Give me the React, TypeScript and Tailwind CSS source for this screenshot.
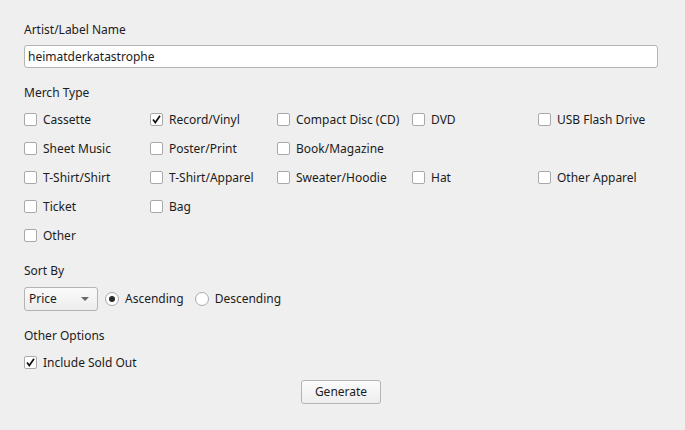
import React from 'react';

const Check: React.FC<{ checked?: boolean }> = ({ checked }) => (
  <span className="flex h-[13px] w-[13px] shrink-0 items-center justify-center rounded-[2px] border border-[#a9a9a9] bg-white">
    {checked && (
      <svg width="11" height="11" viewBox="0 0 11 11">
        <path d="M2 5.5 L4.3 8.6 L9 1.8" fill="none" stroke="#111" strokeWidth="1.7" />
      </svg>
    )}
  </span>
);

const Radio: React.FC<{ checked?: boolean }> = ({ checked }) => (
  <span className="flex h-[14px] w-[14px] shrink-0 items-center justify-center rounded-full border border-[#a9a9a9] bg-white">
    {checked && <span className="h-[6px] w-[6px] rounded-full bg-[#2a2a2a]" />}
  </span>
);

const CheckItem: React.FC<{ label: string; checked?: boolean }> = ({ label, checked }) => (
  <div className="flex h-[29px] items-center gap-[6px] whitespace-nowrap">
    <Check checked={checked} />
    <span>{label}</span>
  </div>
);

const rows: (string | null)[][] = [
  ['Cassette', 'Record/Vinyl', 'Compact Disc (CD)', 'DVD', 'USB Flash Drive'],
  ['Sheet Music', 'Poster/Print', 'Book/Magazine', null, null],
  ['T-Shirt/Shirt', 'T-Shirt/Apparel', 'Sweater/Hoodie', 'Hat', 'Other Apparel'],
  ['Ticket', 'Bag', null, null, null],
  ['Other', null, null, null, null],
];

export default function App() {
  return (
    <div
      className="flex h-[430px] w-[685px] flex-col bg-[#efefef] px-[24px] pt-[22px] text-[12px] leading-[16px] text-[#1c1c1c]"
      style={{ fontFamily: '"Noto Sans", sans-serif' }}
    >
      <div>Artist/Label Name</div>
      <div className="mt-[7px] flex h-[23px] w-[634px] items-center rounded-[3px] border border-[#b4b4b4] bg-white px-[3px]">
        heimatderkatastrophe
      </div>

      <div className="mt-[17px]">Merch Type</div>
      <div className="mt-[4px] grid grid-cols-[126px_127px_135px_126px_auto]">
        {rows.flat().map((item, i) =>
          item ? <CheckItem key={i} label={item} checked={item === 'Record/Vinyl'} /> : <div key={i} className="h-[29px]" />
        )}
      </div>

      <div className="mt-[13px]">Sort By</div>
      <div className="mt-[8px] flex h-[24px] items-center">
        <div className="flex h-[24px] w-[74px] items-center justify-between rounded-[3px] border border-[#b4b4b4] bg-gradient-to-b from-[#fafafa] to-[#ededed] pl-[4px] pr-[8px]">
          <span>Price</span>
          <svg width="8" height="4" viewBox="0 0 8 4">
            <path d="M0 0 H8 L4 4 Z" fill="#6a6a6a" />
          </svg>
        </div>
        <div className="ml-[7px] flex items-center gap-[6px]">
          <Radio checked />
          <span>Ascending</span>
        </div>
        <div className="ml-[11px] flex items-center gap-[6px]">
          <Radio />
          <span>Descending</span>
        </div>
      </div>

      <div className="mt-[17px]">Other Options</div>
      <div className="mt-[4px]">
        <CheckItem label="Include Sold Out" checked />
      </div>

      <div className="mt-[3px] flex w-[634px] justify-center">
        <button className="h-[24px] w-[80px] rounded-[3px] border border-[#b4b4b4] bg-gradient-to-b from-[#fbfbfb] to-[#eeeeee] text-[#1c1c1c]">
          Generate
        </button>
      </div>
    </div>
  );
}
